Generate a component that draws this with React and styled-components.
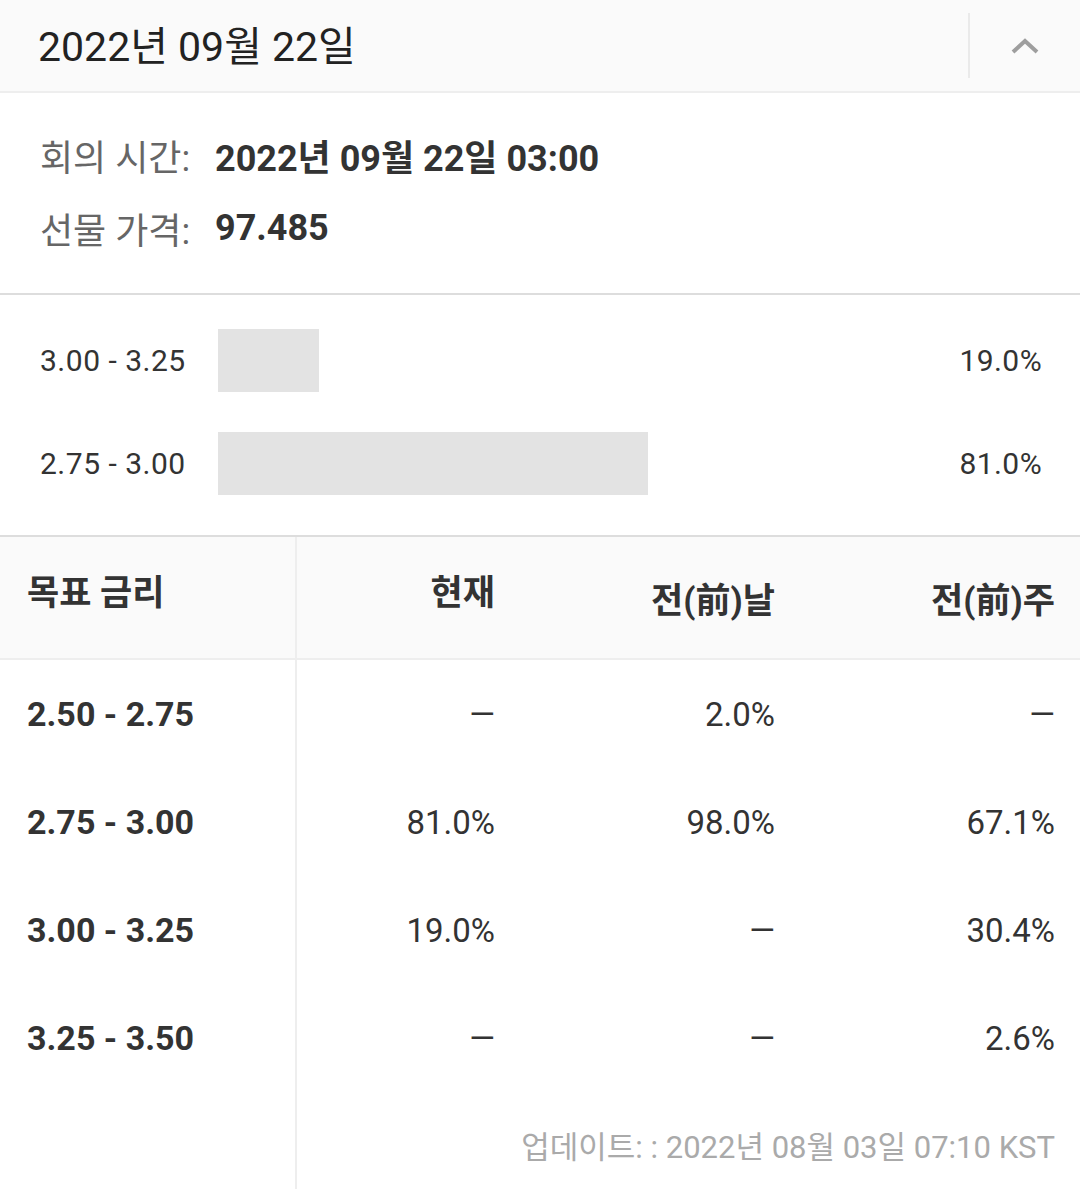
import React from "react";
import styled, { createGlobalStyle } from "styled-components";

const GlobalStyle = createGlobalStyle`
  body {
    margin: 0;
    background: #fff;
    font-family: Roboto, "Noto Sans CJK KR", sans-serif;
  }
`;

const bars = [
  { range: "3.00 - 3.25", pct: 19.0 },
  { range: "2.75 - 3.00", pct: 81.0 },
];

const rows = [
  { range: "2.50 - 2.75", now: "—", day: "2.0%", week: "—" },
  { range: "2.75 - 3.00", now: "81.0%", day: "98.0%", week: "67.1%" },
  { range: "3.00 - 3.25", now: "19.0%", day: "—", week: "30.4%" },
  { range: "3.25 - 3.50", now: "—", day: "—", week: "2.6%" },
];

const Page = styled.div`
  width: 1080px;
  color: #222;
`;

const Header = styled.div`
  display: flex;
  align-items: center;
  height: 91px;
  background: #fafafa;
  border-bottom: 2px solid #eeeeee;
`;

const Title = styled.div`
  flex: 1;
  padding: 0 0 5px 38px;
  font-size: 41px;
  color: #222;
`;

const Toggle = styled.div`
  width: 110px;
  height: 65px;
  display: flex;
  align-items: center;
  justify-content: center;
  border-left: 2px solid #eaeaea;
`;

const Info = styled.div`
  padding: 39px 40px 42px;
  display: flex;
  flex-direction: column;
  gap: 27px;
  border-bottom: 2px solid #dddddd;
`;

const InfoRow = styled.div`
  display: flex;
  align-items: center;
  height: 46px;
`;

const InfoLabel = styled.span`
  width: 175px;
  font-size: 36px;
  color: #666;
`;

const InfoValue = styled.span`
  font-size: 36px;
  font-weight: 700;
  color: #333;
`;

const Bars = styled.div`
  padding: 34px 38px 40px 40px;
  display: flex;
  flex-direction: column;
  gap: 40px;
  border-bottom: 2px solid #dddddd;
`;

const BarRow = styled.div`
  display: flex;
  align-items: center;
  height: 63px;
`;

const BarLabel = styled.span`
  width: 178px;
  font-size: 30px;
  letter-spacing: 0.5px;
  color: #333;
`;

const Track = styled.div`
  width: 531px;
  height: 63px;
`;

const Fill = styled.div`
  height: 100%;
  background: #e3e3e3;
`;

const BarPct = styled.span`
  flex: 1;
  text-align: right;
  font-size: 30px;
  letter-spacing: 0.4px;
  color: #333;
`;

const Table = styled.div`
  display: grid;
  grid-template-columns: 297px 223px 280px 280px;
`;

const HeadCell = styled.div`
  height: 123px;
  background: #fafafa;
  border-bottom: 2px solid #eeeeee;
  display: flex;
  align-items: center;
  justify-content: ${(p) => (p.$first ? "flex-start" : "flex-end")};
  padding: ${(p) => (p.$first ? "0 0 0 27px" : "0 25px 0 0")};
  padding-bottom: ${(p) => (p.$low ? 1 : 17)}px;
  box-sizing: border-box;
  font-size: 35px;
  font-weight: 700;
  color: #333;
  border-right: ${(p) => (p.$first ? "2px solid #eeeeee" : "none")};
`;

const Cell = styled.div`
  height: 108px;
  display: flex;
  align-items: center;
  justify-content: ${(p) => (p.$first ? "flex-start" : "flex-end")};
  padding: ${(p) => (p.$first ? "0 0 0 27px" : "0 25px 0 0")};
  box-sizing: border-box;
  font-size: ${(p) => (p.$first ? 34 : 33)}px;
  font-weight: ${(p) => (p.$first ? 700 : 400)};
  color: #333;
  border-right: ${(p) => (p.$first ? "2px solid #eeeeee" : "none")};
`;

const Footer = styled.div`
  grid-column: 2 / 5;
  height: 104px;
  display: flex;
  align-items: center;
  justify-content: flex-end;
  padding-right: 25px;
  font-size: 31px;
  color: #aaaaaa;
`;

const Chevron = () => (
  <svg width="30" height="20" viewBox="0 0 30 20">
    <polyline
      points="3,16 15,5 27,16"
      fill="none"
      stroke="#9e9e9e"
      strokeWidth="4"
    />
  </svg>
);

export default function App() {
  return (
    <Page>
      <GlobalStyle />
      <Header>
        <Title>2022년 09월 22일</Title>
        <Toggle>
          <Chevron />
        </Toggle>
      </Header>

      <Info>
        <InfoRow>
          <InfoLabel>회의 시간:</InfoLabel>
          <InfoValue>2022년 09월 22일 03:00</InfoValue>
        </InfoRow>
        <InfoRow>
          <InfoLabel>선물 가격:</InfoLabel>
          <InfoValue>97.485</InfoValue>
        </InfoRow>
      </Info>

      <Bars>
        {bars.map((b) => (
          <BarRow key={b.range}>
            <BarLabel>{b.range}</BarLabel>
            <Track>
              <Fill style={{ width: `${b.pct}%` }} />
            </Track>
            <BarPct>{b.pct.toFixed(1)}%</BarPct>
          </BarRow>
        ))}
      </Bars>

      <Table>
        <HeadCell $first>목표 금리</HeadCell>
        <HeadCell>현재</HeadCell>
        <HeadCell $low>전(前)날</HeadCell>
        <HeadCell $low>전(前)주</HeadCell>

        {rows.map((r) => (
          <React.Fragment key={r.range}>
            <Cell $first>{r.range}</Cell>
            <Cell>{r.now}</Cell>
            <Cell>{r.day}</Cell>
            <Cell>{r.week}</Cell>
          </React.Fragment>
        ))}

        <Cell $first />
        <Footer>업데이트: : 2022년 08월 03일 07:10 KST</Footer>
      </Table>
    </Page>
  );
}
